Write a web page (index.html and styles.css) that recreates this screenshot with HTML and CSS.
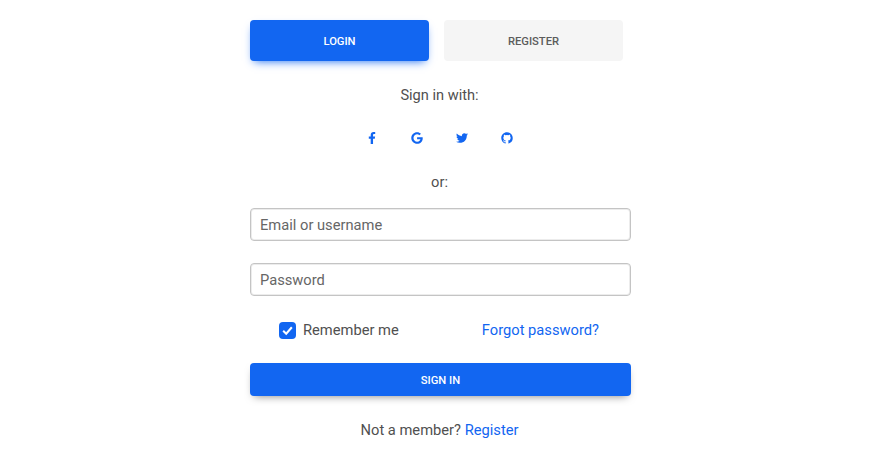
FILE: index.html
```html
<!DOCTYPE html>
<html lang="en">
<head>
    <meta charset="UTF-8">
    <meta name="viewport" content="width=device-width, initial-scale=1.0">
    <title>Login</title>
    <link rel="stylesheet" href="styles.css">
</head>
<body>
    <div class="login-container">
        <div class="tabs">
            <a class="tab tab-active" href="#">Login</a>
            <a class="tab" href="#">Register</a>
        </div>

        <p class="sign-in-with">Sign in with:</p>
        <div class="socials">
            <a class="social" href="#" aria-label="Facebook">
                <svg width="12" height="12" viewBox="0 0 320 512"><path d="M279.14 288l14.22-92.66h-88.91v-60.13c0-25.35 12.42-50.06 52.24-50.06h40.42V6.26S260.43 0 225.36 0c-73.22 0-121.08 44.38-121.08 124.72v70.62H22.89V288h81.39v224h100.17V288z"/></svg>
            </a>
            <a class="social" href="#" aria-label="Google">
                <svg width="12" height="12" viewBox="0 0 488 512"><path d="M488 261.8C488 403.3 391.1 504 248 504 110.8 504 0 393.2 0 256S110.8 8 248 8c66.8 0 123 24.5 166.3 64.9l-67.5 64.9C258.5 52.6 94.3 116.6 94.3 256c0 86.5 69.1 156.6 153.7 156.6 98.2 0 135-70.4 140.8-106.9H248v-85.3h236.1c2.3 12.7 3.9 24.9 3.9 41.4z"/></svg>
            </a>
            <a class="social" href="#" aria-label="Twitter">
                <svg width="12" height="12" viewBox="0 0 512 512"><path d="M459.37 151.716c.325 4.548.325 9.097.325 13.645 0 138.72-105.583 298.558-298.558 298.558-59.452 0-114.68-17.219-161.137-47.106 8.447.974 16.568 1.299 25.34 1.299 49.055 0 94.213-16.568 130.274-44.832-46.132-.975-84.792-31.188-98.112-72.772 6.498.974 12.995 1.624 19.818 1.624 9.421 0 18.843-1.3 27.614-3.573-48.081-9.747-84.143-51.98-84.143-102.985v-1.299c13.969 7.797 30.214 12.67 47.431 13.319-28.264-18.843-46.781-51.005-46.781-87.391 0-19.492 5.197-37.36 14.294-52.954 51.655 63.675 129.3 105.258 216.365 109.807-1.624-7.797-2.599-15.918-2.599-24.04 0-57.828 46.782-104.934 104.934-104.934 30.213 0 57.502 12.67 76.67 33.137 23.715-4.548 46.456-13.645 66.599-25.667-7.798 24.366-24.366 44.833-46.132 57.827 21.117-2.273 41.584-8.122 60.426-16.243-14.292 20.791-32.161 39.308-52.628 54.253z"/></svg>
            </a>
            <a class="social" href="#" aria-label="GitHub">
                <svg width="12" height="12" viewBox="0 0 24 24"><path d="M12 .5C5.65.5.5 5.65.5 12c0 5.08 3.29 9.39 7.86 10.91.58.1.79-.25.79-.56v-2.14c-3.2.7-3.87-1.36-3.87-1.36-.52-1.33-1.28-1.68-1.28-1.68-1.05-.71.08-.7.08-.7 1.15.08 1.76 1.19 1.76 1.19 1.03 1.76 2.69 1.25 3.35.96.1-.75.4-1.25.73-1.54-2.55-.29-5.24-1.28-5.24-5.68 0-1.25.45-2.28 1.18-3.08-.12-.29-.51-1.46.11-3.04 0 0 .96-.31 3.15 1.18a10.9 10.9 0 0 1 5.74 0c2.19-1.49 3.15-1.18 3.15-1.18.62 1.58.23 2.75.11 3.04.74.8 1.18 1.83 1.18 3.08 0 4.41-2.69 5.38-5.25 5.67.41.36.78 1.05.78 2.12v3.14c0 .31.21.67.8.56A11.5 11.5 0 0 0 23.5 12C23.5 5.65 18.35.5 12 .5z"/></svg>
            </a>
        </div>
        <p class="or">or:</p>

        <input class="field" type="text" placeholder="Email or username">
        <input class="field" type="password" placeholder="Password">

        <div class="options">
            <label class="remember">
                <span class="check">
                    <svg width="13" height="13" viewBox="0 0 12 12"><path d="M2 6.3 L4.8 9 L10 3" fill="none" stroke="#fff" stroke-width="1.9"/></svg>
                </span>
                Remember me
            </label>
            <a class="link" href="#">Forgot password?</a>
        </div>

        <button class="submit">Sign in</button>

        <p class="footer-text">Not a member? <a class="link" href="#">Register</a></p>
    </div>
</body>
</html>
```

FILE: styles.css
```css
body {
    margin: 0;
    background: #fff;
    font-family: Roboto, "Liberation Sans", sans-serif;
    color: #505050;
}
a {
    text-decoration: none;
}
.login-container {
    width: 381px;
    margin-left: 250px;
    padding-top: 20px;
}
.tabs {
    display: flex;
    gap: 15px;
    width: 373px;
}
.tab {
    flex: 1;
    height: 41px;
    line-height: 43px;
    text-align: center;
    border-radius: 4px;
    background: #f5f5f5;
    color: #5c5c5c;
    font-size: 11.2px;
    font-weight: 500;
    text-transform: uppercase;
}
.tab-active {
    background: #1266f1;
    color: #fff;
    box-shadow: 0 4px 9px -4px #1266f1;
}
.sign-in-with {
    margin: 22px 0 0;
    padding-right: 2px;
    font-size: 14.6px;
    line-height: 24px;
    text-align: center;
}
.socials {
    display: flex;
    justify-content: center;
    gap: 33px;
    margin-top: 18px;
    padding-right: 2px;
    height: 26px;
    align-items: center;
}
.social {
    display: flex;
    justify-content: center;
    width: 12px;
}
.social svg {
    fill: #1266f1;
}
.or {
    margin: 19px 0 0;
    padding-right: 2px;
    font-size: 14.7px;
    line-height: 24px;
    text-align: center;
}
.field {
    display: block;
    box-sizing: border-box;
    width: 100%;
    height: 33px;
    margin-top: 14px;
    padding: 0 9px;
    border: 1px solid #c4c4c4;
    border-radius: 4px;
    box-shadow: inset 0 0 0 1px #ececec;
    font-family: inherit;
    font-size: 14.7px;
    color: #505050;
    outline: none;
}
.field + .field {
    margin-top: 22px;
}
.field::placeholder {
    color: #666;
    opacity: 1;
}
.options {
    display: flex;
    justify-content: space-between;
    align-items: center;
    padding: 0 32px 0 29px;
    margin-top: 22px;
    height: 24px;
    font-size: 14.7px;
}
.remember {
    display: flex;
    align-items: center;
    gap: 7px;
}
.check {
    display: flex;
    justify-content: center;
    align-items: center;
    width: 17px;
    height: 17px;
    border-radius: 4px;
    background: #1266f1;
}
.link {
    color: #1266f1;
}
.submit {
    display: block;
    width: 100%;
    height: 33px;
    margin-top: 21px;
    padding-top: 3px;
    border: none;
    border-radius: 4px;
    background: #1266f1;
    color: #fff;
    font-family: inherit;
    font-size: 11.2px;
    font-weight: 500;
    text-transform: uppercase;
    box-shadow: 0 4px 9px -4px rgba(0, 0, 0, 0.5);
}
.footer-text {
    margin: 22px 0 0;
    padding-right: 2px;
    font-size: 14.7px;
    line-height: 24px;
    text-align: center;
}
```
